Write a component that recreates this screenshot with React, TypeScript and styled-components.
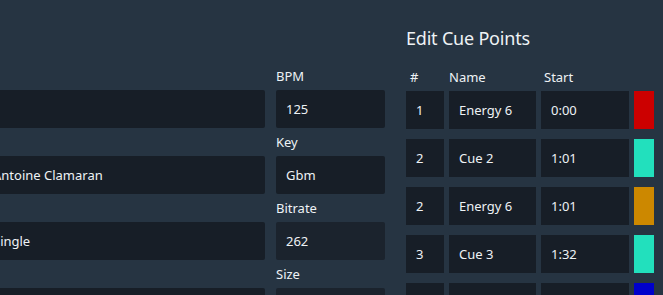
import styled, { createGlobalStyle } from "styled-components";

const GlobalStyle = createGlobalStyle`
  html, body {
    margin: 0;
    padding: 0;
    background: #263442;
    overflow: hidden;
  }
  body {
    font-family: "Noto Sans", "Liberation Sans", sans-serif;
    color: #eef2f5;
  }
`;

const Page = styled.div`
  display: flex;
  align-items: flex-start;
  width: 663px;
  height: 295px;
  overflow: hidden;
`;

const TrackForm = styled.div`
  flex: none;
  margin-left: -17px;
  padding-top: 67px;
  display: grid;
  grid-template-columns: 282px 109px;
  column-gap: 11px;
  row-gap: 5px;
`;

const Field = styled.div`
  display: flex;
  flex-direction: column;
  gap: 5px;
`;

const Label = styled.label`
  font-size: 13px;
  line-height: 18px;
  height: 18px;
  color: #eef2f5;
`;

const Value = styled.div<{ $disabled?: boolean }>`
  height: 38px;
  box-sizing: border-box;
  padding: 0 11px 0 10px;
  display: flex;
  align-items: center;
  border-radius: 2px;
  background: ${(p) => (p.$disabled ? "#1b232d" : "#171e27")};
  font-size: 13px;
  white-space: nowrap;
  overflow: hidden;
`;

const CuePanel = styled.div`
  flex: none;
  margin-left: 21px;
  padding-top: 26px;
`;

const Title = styled.h2`
  margin: 0 0 18px;
  font-size: 18px;
  line-height: 24px;
  font-weight: 400;
  letter-spacing: -0.2px;
`;

const CueGrid = styled.div`
  display: grid;
  grid-template-columns: 38px 87px 88px 20px;
  column-gap: 5px;
  row-gap: 10px;
`;

const HeadCell = styled.div<{ $inset: number }>`
  font-size: 13px;
  line-height: 18px;
  padding-left: ${(p) => p.$inset}px;
  margin-bottom: -5px;
`;

const Cell = styled.div`
  height: 38px;
  box-sizing: border-box;
  padding-left: 10px;
  display: flex;
  align-items: center;
  background: #171e27;
  font-size: 13px;
  white-space: nowrap;
`;

const Swatch = styled.div<{ $color: string }>`
  height: 38px;
  background: ${(p) => p.$color};
`;

const cues = [
  { n: "1", name: "Energy 6", start: "0:00", color: "#cc0000" },
  { n: "2", name: "Cue 2", start: "1:01", color: "#22e0bd" },
  { n: "2", name: "Energy 6", start: "1:01", color: "#cc8800" },
  { n: "3", name: "Cue 3", start: "1:32", color: "#22e0bd" },
  { n: "4", name: "Energy 8", start: "2:04", color: "#0000cc" },
];

export default function App() {
  return (
    <>
      <GlobalStyle />
      <Page>
        <TrackForm>
          <Field>
            <Label />
            <Value />
          </Field>
          <Field>
            <Label>BPM</Label>
            <Value>125</Value>
          </Field>
          <Field>
            <Label />
            <Value>Antoine Clamaran</Value>
          </Field>
          <Field>
            <Label>Key</Label>
            <Value>Gbm</Value>
          </Field>
          <Field>
            <Label />
            <Value>Single</Value>
          </Field>
          <Field>
            <Label>Bitrate</Label>
            <Value $disabled>262</Value>
          </Field>
          <Field>
            <Label />
            <Value />
          </Field>
          <Field>
            <Label>Size</Label>
            <Value $disabled />
          </Field>
        </TrackForm>
        <CuePanel>
          <Title>Edit Cue Points</Title>
          <CueGrid>
            <HeadCell $inset={4}>#</HeadCell>
            <HeadCell $inset={0}>Name</HeadCell>
            <HeadCell $inset={3}>Start</HeadCell>
            <div />
            {cues.map((c, i) => (
              <>
                <Cell key={`n${i}`}>{c.n}</Cell>
                <Cell key={`m${i}`}>{c.name}</Cell>
                <Cell key={`s${i}`}>{c.start}</Cell>
                <Swatch key={`c${i}`} $color={c.color} />
              </>
            ))}
          </CueGrid>
        </CuePanel>
      </Page>
    </>
  );
}
